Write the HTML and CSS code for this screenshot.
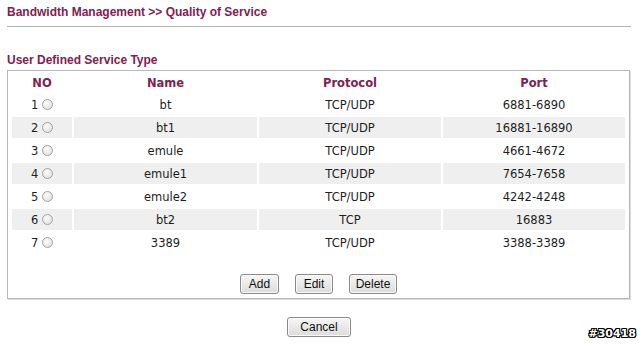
FILE: index.html
```html
<!DOCTYPE html>
<html lang="en">
<head>
  <meta charset="UTF-8" />
  <title>Quality of Service</title>
  <link rel="stylesheet" href="styles.css">
</head>
<body>
  <div class="page">
    <div class="page-title">Bandwidth Management &gt;&gt; Quality of Service</div>

    <div class="section-title">User Defined Service Type</div>
    <div class="box">
      <table class="svc-table">
        <tr class="head">
          <th class="c-no">NO</th>
          <th class="c-name">Name</th>
          <th class="c-proto">Protocol</th>
          <th class="c-port">Port</th>
        </tr>
        <tr>
          <td class="no">1 <input type="radio" name="svc"></td>
          <td>bt</td>
          <td>TCP/UDP</td>
          <td>6881-6890</td>
        </tr>
        <tr class="alt">
          <td class="no">2 <input type="radio" name="svc"></td>
          <td>bt1</td>
          <td>TCP/UDP</td>
          <td>16881-16890</td>
        </tr>
        <tr>
          <td class="no">3 <input type="radio" name="svc"></td>
          <td>emule</td>
          <td>TCP/UDP</td>
          <td>4661-4672</td>
        </tr>
        <tr class="alt">
          <td class="no">4 <input type="radio" name="svc"></td>
          <td>emule1</td>
          <td>TCP/UDP</td>
          <td>7654-7658</td>
        </tr>
        <tr>
          <td class="no">5 <input type="radio" name="svc"></td>
          <td>emule2</td>
          <td>TCP/UDP</td>
          <td>4242-4248</td>
        </tr>
        <tr class="alt">
          <td class="no">6 <input type="radio" name="svc"></td>
          <td>bt2</td>
          <td>TCP</td>
          <td>16883</td>
        </tr>
        <tr>
          <td class="no">7 <input type="radio" name="svc"></td>
          <td>3389</td>
          <td>TCP/UDP</td>
          <td>3388-3389</td>
        </tr>
      </table>

      <div class="actions">
        <button class="btn btn-add">Add</button>
        <button class="btn btn-edit">Edit</button>
        <button class="btn btn-delete">Delete</button>
      </div>
    </div>

    <div class="footer">
      <button class="btn btn-cancel">Cancel</button>
    </div>
  </div>

  <div class="tag">#30418</div>
</body>
</html>
```

FILE: styles.css
```css
* {
  margin: 0;
  padding: 0;
  box-sizing: border-box;
}
html, body {
  height: 100%;
  background: #fff;
  overflow: hidden;
}
body {
  position: relative;
  font-family: 'DejaVu Sans', Verdana, sans-serif;
  color: #222;
}

.page {
  width: 624px;
  margin-left: 7px;
}

.page-title {
  font-family: 'Liberation Sans', Arial, sans-serif;
  font-weight: bold;
  font-size: 12px;
  color: #7f2151;
  padding: 5px 0 6px 0;
  line-height: 15px;
  border-bottom: 1px solid #b4b4b4;
}

.section-title {
  font-family: 'Liberation Sans', Arial, sans-serif;
  font-weight: bold;
  font-size: 12px;
  color: #7f2151;
  line-height: 15px;
  margin-top: 26px;
  padding-bottom: 2px;
}

.box {
  width: 623px;
  border: 1px solid #b8b8b8;
  box-shadow: 1px 1px 0 #dcdcdc;
  padding: 0 2px;
}

.svc-table {
  width: 100%;
  border-collapse: separate;
  border-spacing: 2px;
  table-layout: fixed;
  font-size: 11.5px;
}
.svc-table th {
  height: 19px;
  font-weight: bold;
  color: #7f2151;
  text-align: center;
}
.svc-table td {
  height: 21px;
  text-align: center;
  color: #1e1e1e;
}
.c-no { width: 60px; }
.c-name { width: 183px; }
.c-proto { width: 182px; }

.alt td {
  background: #efefef;
}

.no input[type=radio] {
  appearance: none;
  -webkit-appearance: none;
  width: 11px;
  height: 11px;
  border-radius: 50%;
  border: 1px solid #a3a3a3;
  background: radial-gradient(circle at 40% 35%, #fcfcfc, #dadada);
  vertical-align: -1px;
  margin-left: 0;
}

.actions {
  display: flex;
  justify-content: center;
  gap: 16px;
  padding: 19px 0 4px 0;
}

.footer {
  display: flex;
  justify-content: center;
  padding-top: 18px;
}

.btn {
  font-family: 'Liberation Sans', Arial, sans-serif;
  font-size: 12px;
  color: #111;
  height: 20px;
  border: 1px solid #8a8a8a;
  border-radius: 3px;
  background: linear-gradient(to bottom, #f6f6f6, #dcdcdc);
  box-shadow: inset 0 0 0 1px #fafafa;
}
.btn-add { width: 39px; }
.btn-edit { width: 38px; }
.btn-delete { width: 48px; }
.btn-cancel { width: 64px; }

.tag {
  position: absolute;
  right: 4px;
  bottom: 6px;
  font-family: 'DejaVu Sans', sans-serif;
  font-weight: bold;
  font-size: 11px;
  color: #fff;
  text-shadow:
    1px 0 0 #000, -1px 0 0 #000, 0 1px 0 #000, 0 -1px 0 #000,
    1px 1px 0 #000, -1px -1px 0 #000, 1px -1px 0 #000, -1px 1px 0 #000;
}
```
